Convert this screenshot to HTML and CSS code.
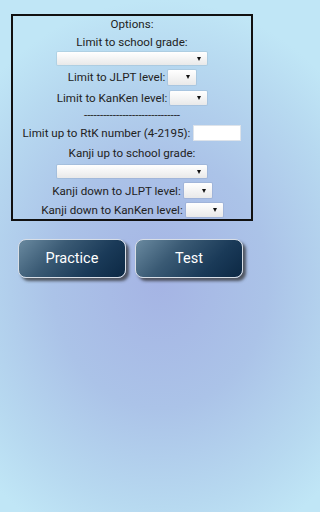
FILE: index.html
```html
<!DOCTYPE html>
<html>
<head>
<meta charset="utf-8">
<link rel="stylesheet" href="styles.css">
</head>
<body>
<div class="page">
  <div class="panel">
    <div class="row r1">Options:</div>
    <div class="row r2">Limit to school grade:</div>
    <div class="row r3"><span class="sel wide"><select><option></option></select></span></div>
    <div class="row r4">Limit to JLPT level:<span class="sel small"><select><option></option></select></span></div>
    <div class="row r5">Limit to KanKen level:<span class="sel mid"><select><option></option></select></span></div>
    <div class="row r6">------------------------------</div>
    <div class="row r7">Limit up to RtK number (4-2195):<input class="num" type="text"></div>
    <div class="row r8">Kanji up to school grade:</div>
    <div class="row r9"><span class="sel wide"><select><option></option></select></span></div>
    <div class="row r10">Kanji down to JLPT level:<span class="sel small"><select><option></option></select></span></div>
    <div class="row r11">Kanji down to KanKen level:<span class="sel mid"><select><option></option></select></span></div>
  </div>
  <div class="buttons">
    <button class="btn">Practice</button>
    <button class="btn">Test</button>
  </div>
</div>
</body>
</html>
```
FILE: styles.css
```css
html, body {
  margin: 0;
  padding: 0;
  height: 100%;
}
body {
  overflow: hidden;
  font-family: Roboto, "Liberation Sans", sans-serif;
  font-size: 11.6px;
  color: #222;
  background: radial-gradient(ellipse 75% 55% at 50% 55%, #a5b4e4 0%, #abc3e8 45%, #b7d9f0 80%, #c0e6f6 100%);
}
.page {
  width: 262px;
  padding-top: 14px;
}
.panel {
  margin: 0 9px 0 11px;
  border: 2px solid #111;
  display: flex;
  flex-direction: column;
}
.row {
  display: flex;
  align-items: center;
  justify-content: center;
  gap: 3px;
  white-space: nowrap;
}
.r1 { height: 16px; }
.r2 { height: 19px; }
.r3 { height: 15px; }
.r4 { height: 22px; }
.r5 { height: 20px; }
.r6 { height: 14px; }
.r7 { height: 22px; }
.r8 { height: 18px; }
.r9 { height: 19px; }
.r10 { height: 19px; }
.r11 { height: 19px; }
.sel {
  position: relative;
  display: block;
}
.sel select {
  -webkit-appearance: none;
  appearance: none;
  display: block;
  border: none;
  border-radius: 1px;
  margin: 0;
  padding: 0;
  background: linear-gradient(#ffffff, #e9e9e9);
  box-shadow: 0 0 0 1px rgba(0,0,0,0.06);
}
.sel::after {
  content: "";
  position: absolute;
  right: 6px;
  top: 50%;
  margin-top: -2px;
  border-left: 2px solid transparent;
  border-right: 2px solid transparent;
  border-top: 4px solid #111;
}
.sel.wide select { width: 150px; height: 13px; }
.sel.small select { width: 28px; height: 15px; }
.sel.mid select { width: 37px; height: 14px; }
.num {
  width: 48px;
  height: 16px;
  box-sizing: border-box;
  border: 1px solid #dde3ea;
  background: #fff;
  padding: 0;
  margin: 0;
}
.buttons {
  display: flex;
  gap: 9px;
  margin: 18px 0 0 18px;
}
.btn {
  width: 108px;
  height: 39px;
  border: 1.5px solid #d8dee6;
  border-radius: 8px;
  background: linear-gradient(135deg, #6a8aa0 0%, #3a5a74 35%, #1a3a58 70%, #0c2844 100%);
  color: #fff;
  font-family: Roboto, "Liberation Sans", sans-serif;
  font-size: 14.5px;
  box-shadow: 3px 3px 3px rgba(40,40,40,0.7);
  padding: 0;
}
```
